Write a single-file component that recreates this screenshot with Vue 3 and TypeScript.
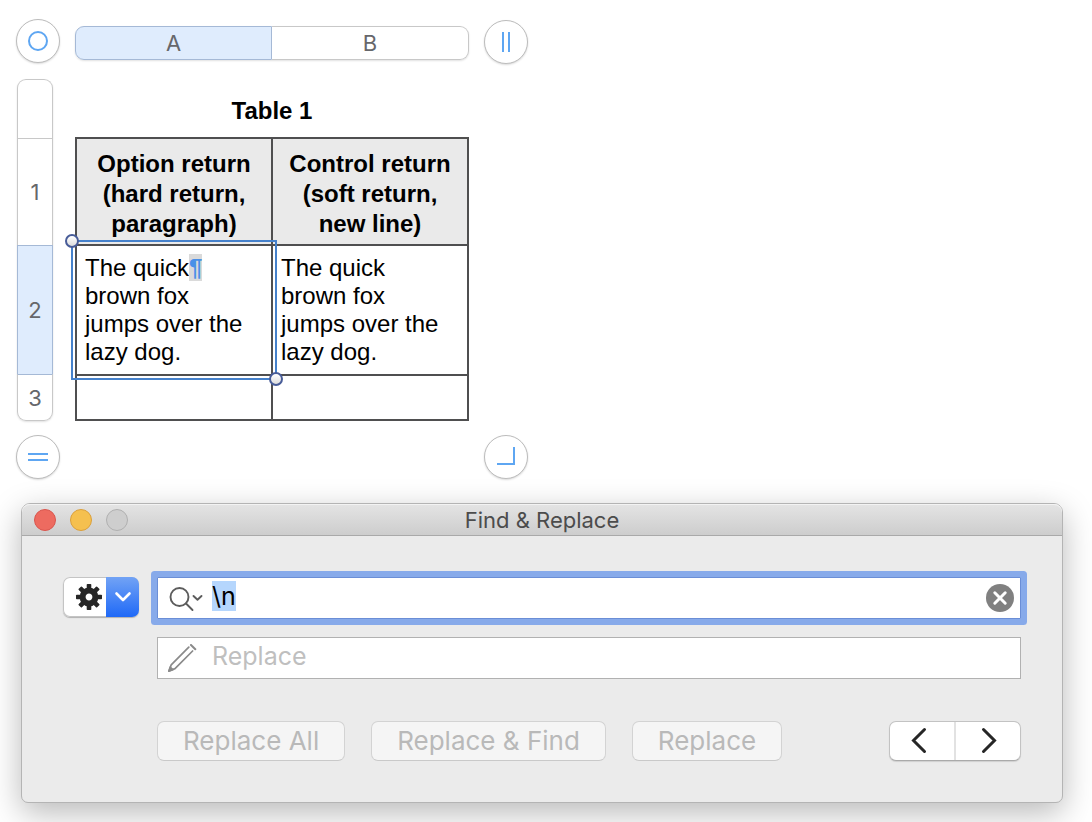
<script setup lang="ts">
import { onMounted, ref } from 'vue'

interface Column { id: string; selected: boolean }
interface Row { id: string; label: string; size: string; selected: boolean }

const columns: Column[] = [
  { id: 'A', selected: true },
  { id: 'B', selected: false },
]

const rows: Row[] = [
  { id: 'title', label: '', size: 'title', selected: false },
  { id: 'r1', label: '1', size: 'head', selected: false },
  { id: 'r2', label: '2', size: 'text', selected: true },
  { id: 'r3', label: '3', size: 'blank', selected: false },
]

const actions: string[] = ['Replace All', 'Replace & Find', 'Replace']

const findText = ref('\\n')
const replaceText = ref('')
const findInput = ref<HTMLInputElement | null>(null)

function clearFind(): void {
  findText.value = ''
  findInput.value?.focus()
}

onMounted(() => {
  findInput.value?.focus()
  findInput.value?.select()
})
</script>

<template>
  <main class="page">
    <section class="sheet" aria-label="Spreadsheet">
      <button class="round corner" type="button" aria-label="Select table">
        <svg viewBox="0 0 24 24"><circle cx="12" cy="12" r="9" /></svg>
      </button>
      <div class="col-rail">
        <button
          v-for="column in columns"
          :key="column.id"
          type="button"
          class="col-tab"
          :class="{ selected: column.selected }"
        >{{ column.id }}</button>
      </div>
      <button class="round" type="button" aria-label="Add column">
        <svg viewBox="0 0 24 24"><path d="M9 2v20M15 2v20" /></svg>
      </button>

      <div class="row-rail">
        <button
          v-for="row in rows"
          :key="row.id"
          type="button"
          class="row-tab"
          :class="[row.size, { selected: row.selected }]"
          :aria-label="row.label ? 'Row ' + row.label : 'Table name'"
        >{{ row.label }}</button>
      </div>
      <table class="table">
        <caption>Table 1</caption>
        <thead>
          <tr>
            <th scope="col">Option return (hard return, paragraph)</th>
            <th scope="col">Control return (soft return, new line)</th>
          </tr>
        </thead>
        <tbody>
          <tr>
            <td class="active">
              The quick<span class="pilcrow">¶</span><br>brown fox<br>jumps over the lazy dog.
              <span class="selection"><i class="handle start"></i><i class="handle end"></i></span>
            </td>
            <td>The quick<br>brown fox<br>jumps over the lazy dog.</td>
          </tr>
          <tr class="empty"><td></td><td></td></tr>
        </tbody>
      </table>
      <span></span>

      <button class="round" type="button" aria-label="Add row">
        <svg viewBox="0 0 24 24"><path d="M2 9h20M2 15h20" /></svg>
      </button>
      <span></span>
      <button class="round" type="button" aria-label="Resize table">
        <svg viewBox="0 0 24 24"><path d="M3 19h18M20 2v18" /></svg>
      </button>
    </section>

    <section class="dialog" role="dialog" aria-labelledby="dialog-title">
      <header class="titlebar">
        <div class="lights">
          <button class="light red" type="button" aria-label="Close"></button>
          <button class="light yellow" type="button" aria-label="Minimize"></button>
          <button class="light off" type="button" aria-label="Zoom" disabled></button>
        </div>
        <h1 id="dialog-title">Find &amp; Replace</h1>
      </header>

      <div class="body">
        <button class="options" type="button" aria-label="Search options">
          <span class="gear">
            <svg viewBox="-14 -14 28 28">
              <g fill="#262626">
                <rect
                  v-for="n in 8"
                  :key="n"
                  x="-2.3"
                  y="-13"
                  width="4.6"
                  height="7"
                  rx="0.8"
                  :transform="`rotate(${n * 45})`"
                />
              </g>
              <circle r="6.4" fill="none" stroke="#262626" stroke-width="6" />
            </svg>
          </span>
          <span class="drop">
            <svg viewBox="0 0 18 12"><path d="M2.500 2.500L9 9l6.500-6.500" /></svg>
          </span>
        </button>

        <form class="form" @submit.prevent>
          <div class="field focused">
            <label for="find" aria-label="Find">
              <svg viewBox="0 0 36 28">
                <circle cx="11.500" cy="13" r="9" />
                <path d="M18 19.500L24.500 26M25.500 12l4 3.800 4-3.800" />
              </svg>
            </label>
            <input id="find" ref="findInput" v-model="findText" type="text" autocomplete="off" spellcheck="false">
            <button class="clear" type="button" aria-label="Clear" @click="clearFind">
              <svg viewBox="0 0 28 28"><path d="M8.800 8.800l10.400 10.400M19.200 8.800L8.800 19.200" /></svg>
            </button>
          </div>
          <div class="field">
            <label for="replace" aria-label="Replace with">
              <svg class="pencil" viewBox="0 0 36 28">
                <path d="M20.800 3.200L3.200 20.800 1 27l6-2.400L24.600 7" />
                <path class="cap" d="M23 1l4.300 4.300" />
                <path class="tip" d="M2.200 23.200L0.800 27.200l4-1.600z" />
              </svg>
            </label>
            <input id="replace" v-model="replaceText" type="text" placeholder="Replace">
          </div>
          <div class="actions">
            <button v-for="action in actions" :key="action" class="push" type="button" disabled>{{ action }}</button>
            <div class="nav">
              <button type="button" aria-label="Previous match">
                <svg viewBox="0 0 28 28"><path d="M16.500 2.500L5.500 13.500l11 11" /></svg>
              </button>
              <button type="button" aria-label="Next match">
                <svg viewBox="0 0 28 28"><path d="M9.500 2.500l11 11-11 11" /></svg>
              </button>
            </div>
          </div>
        </form>
      </div>
    </section>
  </main>
</template>

<style>
body {
  background: #fff;
}
</style>

<style scoped>
* {
  box-sizing: border-box;
}

button {
  margin: 0;
  padding: 0;
  border: 0;
  background: none;
  font: inherit;
  color: inherit;
}

svg {
  display: block;
}

.page {
  display: flex;
  flex-direction: column;
  gap: 24px;
  padding: 19px 29px 19px 16px;
  font-family: Inter, "Liberation Sans", sans-serif;
  color: #000;
}

.sheet {
  display: grid;
  grid-template-columns: 44px 394px 44px;
  grid-template-rows: 46px auto auto;
  column-gap: 15px;
  row-gap: 14px;
}

.round {
  display: grid;
  place-items: center;
  align-self: center;
  width: 44px;
  height: 44px;
  border: 1px solid #bcbcbc;
  border-radius: 50%;
  background: #fff;
  box-shadow: 0 1px 2px rgba(0, 0, 0, 0.15);
}

.round.corner {
  align-self: start;
}

.round svg {
  width: 24px;
  height: 24px;
  fill: none;
  stroke: #5ea6f2;
  stroke-width: 2;
}

.col-rail {
  display: flex;
  align-self: end;
  height: 34px;
  margin-bottom: 5px;
  border-radius: 9px;
  box-shadow: 0 1px 2px rgba(0, 0, 0, 0.12);
}

.col-tab,
.row-tab {
  background: #fff;
  color: #66676b;
  font-size: 22px;
  line-height: 28px;
}

.col-tab {
  width: 50%;
  border: 1px solid #c8c8c8;
}

.col-tab:first-child {
  border-radius: 9px 0 0 9px;
}

.col-tab:last-child {
  border-left: 0;
  border-radius: 0 9px 9px 0;
}

.col-tab.selected,
.row-tab.selected {
  background: #dfecfd;
  border-color: #a5b9d6;
}

.row-rail {
  display: flex;
  flex-direction: column;
  width: 36px;
  margin-left: 1px;
  border-radius: 9px;
  box-shadow: 0 1px 2px rgba(0, 0, 0, 0.12);
}

.row-tab {
  border: 1px solid #c8c8c8;
  border-bottom: 0;
}

.row-tab:first-child {
  border-radius: 9px 9px 0 0;
}

.row-tab:last-child {
  flex: 1;
  border-top-color: #a5b9d6;
  border-bottom: 1px solid #c8c8c8;
  border-radius: 0 0 9px 9px;
}

.row-tab.title {
  height: 59px;
}

.row-tab.head {
  height: 107px;
}

.row-tab.text {
  height: 129px;
}

.table {
  width: 100%;
  table-layout: fixed;
  border-collapse: collapse;
  font-family: "Liberation Sans", Arial, sans-serif;
  font-size: 24px;
  line-height: 28px;
}

.table caption {
  padding: 17px 0 11px;
  font-weight: 700;
  line-height: 30px;
}

.table th,
.table td {
  border: 2px solid #4f4f50;
}

.table th {
  padding: 10px 8px 5px;
  background: #eaeaea;
  font-weight: 700;
  line-height: 30px;
}

.table td {
  padding: 8px 24px 8px 8px;
  vertical-align: top;
}

.table .empty td {
  height: 45px;
}

.table .active {
  position: relative;
}

.pilcrow {
  background: #dadada;
  color: #4a90e8;
  font-weight: 700;
}

.selection {
  position: absolute;
  inset: -6px;
  border: 2px solid #4581cb;
}

.handle {
  position: absolute;
  width: 14px;
  height: 14px;
  border: 2px solid #485c98;
  border-radius: 50%;
  background: linear-gradient(#fff, #dcdcdc);
}

.handle.start {
  top: -8px;
  left: -8px;
}

.handle.end {
  right: -8px;
  bottom: -8px;
}

.dialog {
  margin-left: 5px;
  border: 1px solid #b4b4b4;
  border-radius: 9px 9px 7px 7px;
  background: #ebebeb;
  box-shadow: 0 10px 32px rgba(0, 0, 0, 0.28);
}

.titlebar {
  display: grid;
  grid-template-columns: 1fr auto 1fr;
  align-items: center;
  height: 32px;
  padding: 0 12px;
  border-bottom: 1px solid #a9a9a9;
  border-radius: 8px 8px 0 0;
  background: linear-gradient(#e4e4e4, #cdcdcd);
  box-shadow: inset 0 1px #f3f3f3;
}

.titlebar h1 {
  margin: 0;
  color: #4c4c4c;
  font-size: 22px;
  font-weight: 400;
  line-height: 28px;
}

.lights {
  display: flex;
  gap: 14px;
}

.light {
  width: 22px;
  height: 22px;
  border: 1px solid #d9554d;
  border-radius: 50%;
  background: #ed6b60;
}

.light.yellow {
  border-color: #dba03c;
  background: #f5c04f;
}

.light.off {
  border-color: #b0b0b0;
  background: #cecece;
}

.body {
  display: grid;
  grid-template-columns: 76px 1fr;
  align-items: start;
  column-gap: 18px;
  padding: 41px;
}

.options {
  display: flex;
  height: 40px;
  border-radius: 7px;
  background: #fff;
  box-shadow: inset 0 0 0 1px #c4c4c4, 0 1px 1px rgba(0, 0, 0, 0.25);
  overflow: hidden;
}

.gear {
  display: grid;
  flex: 1;
  place-items: center;
  height: 40px;
  padding-left: 8px;
}

.gear svg {
  width: 28px;
  height: 28px;
}

.drop {
  display: grid;
  place-items: center;
  width: 33px;
  height: 40px;
  background: linear-gradient(#72a3f5, #1f69f7);
}

.drop svg {
  width: 18px;
  height: 12px;
  fill: none;
  stroke: #fff;
  stroke-width: 2.6;
  stroke-linecap: round;
  stroke-linejoin: round;
}

.form {
  display: flex;
  flex-direction: column;
  gap: 18px;
}

.field {
  display: flex;
  align-items: center;
  height: 42px;
  padding: 0 6px 0 10px;
  border: 1px solid #b1b1b1;
  background: #fff;
}

.field.focused {
  border-color: #6b8ed6;
  box-shadow: 0 0 0 6px #87aaea;
  border-radius: 1px;
}

.field label {
  width: 44px;
}

.field label svg {
  width: 36px;
  height: 28px;
  fill: none;
  stroke: #5c5c5c;
  stroke-width: 1.9;
  stroke-linecap: round;
  stroke-linejoin: round;
}

.field label .pencil {
  stroke: #8a8a8a;
  stroke-width: 1.7;
}

.pencil .cap {
  stroke-width: 2;
}

.pencil .tip {
  fill: #8a8a8a;
}

.field input {
  flex: 1;
  min-width: 0;
  height: 34px;
  margin: 0;
  padding: 0 0 4px;
  border: 0;
  outline: 0;
  background: none;
  color: #000;
  font-family: inherit;
  font-size: 25px;
  line-height: 30px;
}

.field input::selection {
  background: #b5d6fd;
  color: #000;
}

.field input::placeholder {
  color: #bfbfbf;
  opacity: 1;
}

.clear {
  width: 28px;
  height: 28px;
  border-radius: 50%;
  background: #808080;
}

.clear svg {
  width: 28px;
  height: 28px;
  stroke: #fff;
  stroke-width: 3;
  stroke-linecap: round;
}

.actions {
  display: flex;
  gap: 26px;
  margin-top: 24px;
}

.push {
  height: 40px;
  padding: 0 25px;
  border: 1px solid #d3d3d3;
  border-bottom-color: #c9c9c9;
  border-radius: 7px;
  background: #f5f5f5;
  color: #b9b9b9;
  font-size: 26px;
  line-height: 32px;
  white-space: nowrap;
}

.nav {
  display: flex;
  width: 132px;
  height: 40px;
  margin-left: auto;
  border: 1px solid #c3c3c3;
  border-bottom-color: #aaa;
  border-radius: 7px;
  background: #fff;
  box-shadow: 0 1px 1px rgba(0, 0, 0, 0.12);
}

.nav button {
  display: grid;
  flex: 1;
  place-items: center;
}

.nav button + button {
  border-left: 2px solid #e2e2e2;
}

.nav svg {
  width: 28px;
  height: 28px;
  fill: none;
  stroke: #262626;
  stroke-width: 3;
  stroke-linecap: round;
}
</style>
